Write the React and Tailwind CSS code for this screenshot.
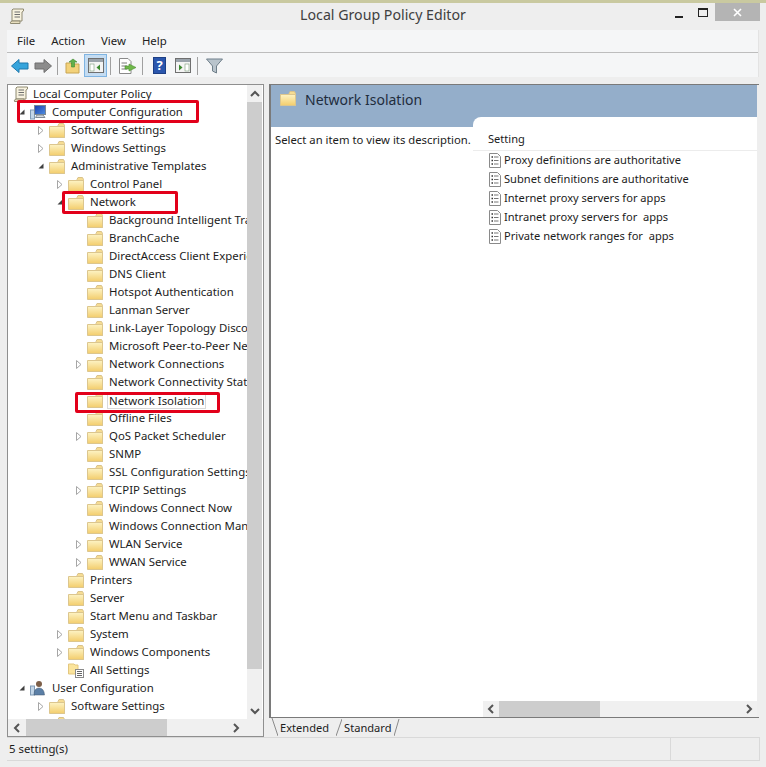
const Folder = () => (
  <svg width="16" height="15" viewBox="0 0 16 15">
    <defs>
      <linearGradient id="folderFill" x1="0" y1="0" x2="0" y2="1">
        <stop offset="0" stopColor="#fdf3c4" />
        <stop offset="1" stopColor="#f3cd6c" />
      </linearGradient>
    </defs>
    <path d="M9 2.5 L10 0.5 H14.5 L15.5 2.5 V14.5 H9 Z" fill="#f6dc92" stroke="#d9c28a" />
    <path d="M0.5 3.5 H15.5 V14.5 H0.5 Z" fill="url(#folderFill)" stroke="#dcc68e" />
  </svg>
);

const SettingIcon = () => (
  <svg width="12" height="15" viewBox="0 0 12 15">
    <path d="M0.5 0.5 H8.5 L11.5 3.5 V14.5 H0.5 Z" fill="#fff" stroke="#8a8a8a" />
    <path d="M2.5 4 H4 M2.5 7.5 H4 M2.5 11 H4" stroke="#333" strokeWidth="1.5" />
    <path d="M5 4 H9.5 M5 7.5 H9.5 M5 11 H9.5" stroke="#777" />
  </svg>
);

const PolicyIcon = () => (
  <svg width="16" height="17" viewBox="0 0 16 17">
    <path d="M4 1 H14.5 V3 L13 4 V13 H3 V2 Z" fill="#f7f2df" stroke="#8f8a72" />
    <path d="M3 13 H11 V15.5 H1.5 Q0.5 14 3 13 Z" fill="#e8dfbf" stroke="#8f8a72" />
    <path d="M5.5 4 H11 M5.5 6.5 H11 M5.5 9 H11" stroke="#6f6f6f" />
  </svg>
);

const ComputerIcon = () => (
  <svg width="16" height="15" viewBox="0 0 16 15">
    <defs>
      <linearGradient id="screenFill" x1="0" y1="0" x2="1" y2="1">
        <stop offset="0" stopColor="#1a3fae" />
        <stop offset="1" stopColor="#4f8fe0" />
      </linearGradient>
    </defs>
    <rect x="0.5" y="5" width="4" height="9" fill="#c3d6e8" stroke="#7f9ab5" />
    <rect x="4.5" y="0.5" width="11" height="9" fill="url(#screenFill)" stroke="#7a8794" />
    <path d="M7 10 H13 L15 12.5 H5.5 Z" fill="#d5d9dd" stroke="#7f8a95" />
  </svg>
);

const UserIcon = () => (
  <svg width="16" height="16" viewBox="0 0 16 16">
    <rect x="0.5" y="6" width="4" height="9" fill="#c3d6e8" stroke="#7f9ab5" />
    <circle cx="9" cy="4" r="3" fill="#7d5f48" />
    <path d="M4 15 Q4 8 9 8 Q14 8 14.5 15 Z" fill="#5b7fa6" stroke="#40566f" strokeWidth="0.5" />
  </svg>
);

const AllSettingsIcon = () => (
  <svg width="16" height="16" viewBox="0 0 16 16">
    <path d="M0.5 2 H6 L7 3 H10 V12 H0.5 Z" fill="#fbe49c" stroke="#e3c77f" />
    <rect x="7.5" y="7.5" width="8" height="8" fill="#fff" stroke="#8a8a8a" />
    <path d="M9 9.5 H14 M9 11.5 H14 M9 13.5 H14" stroke="#666" />
  </svg>
);

const Arrow = ({ state }) => {
  if (state === 'open') {
    return (
      <svg width="6" height="6" viewBox="0 0 6 6">
        <path d="M5.5 0.5 V5.5 H0.5 Z" fill="#404040" />
      </svg>
    );
  }
  if (state === 'closed') {
    return (
      <svg width="6" height="9" viewBox="0 0 6 9">
        <path d="M0.5 0.5 L5 4.5 L0.5 8.5 Z" fill="#fff" stroke="#a6a6a6" />
      </svg>
    );
  }
  return null;
};

// level, label, arrow state, icon kind
const treeRows = [
  [0, 'Computer Configuration', 'open', 'computer'],
  [1, 'Software Settings', 'closed'],
  [1, 'Windows Settings', 'closed'],
  [1, 'Administrative Templates', 'open'],
  [2, 'Control Panel', 'closed'],
  [2, 'Network', 'open'],
  [3, 'Background Intelligent Transfer Service'],
  [3, 'BranchCache'],
  [3, 'DirectAccess Client Experience Settings'],
  [3, 'DNS Client'],
  [3, 'Hotspot Authentication'],
  [3, 'Lanman Server'],
  [3, 'Link-Layer Topology Discovery'],
  [3, 'Microsoft Peer-to-Peer Networking'],
  [3, 'Network Connections', 'closed'],
  [3, 'Network Connectivity Status Indicator'],
  [3, 'Network Isolation', null, 'selected'],
  [3, 'Offline Files'],
  [3, 'QoS Packet Scheduler', 'closed'],
  [3, 'SNMP'],
  [3, 'SSL Configuration Settings'],
  [3, 'TCPIP Settings', 'closed'],
  [3, 'Windows Connect Now'],
  [3, 'Windows Connection Manager'],
  [3, 'WLAN Service', 'closed'],
  [3, 'WWAN Service', 'closed'],
  [2, 'Printers'],
  [2, 'Server'],
  [2, 'Start Menu and Taskbar'],
  [2, 'System', 'closed'],
  [2, 'Windows Components', 'closed'],
  [2, 'All Settings', null, 'allsettings'],
  [0, 'User Configuration', 'open', 'user'],
  [1, 'Software Settings', 'closed'],
  [1, ''],
];

const indents = { 0: 'pl-[10px]', 1: 'pl-[29px]', 2: 'pl-[48px]', 3: 'pl-[67px]' };

const settings = [
  'Proxy definitions are authoritative',
  'Subnet definitions are authoritative',
  'Internet proxy servers for apps',
  'Intranet proxy servers for  apps',
  'Private network ranges for  apps',
];

const ToolButton = ({ children, active }) => (
  <div className={`w-[23px] h-[23px] flex items-center justify-center ${active ? 'bg-[#c4dcf2] border border-[#7fb4e2]' : ''}`}>
    {children}
  </div>
);

const Sep = () => <div className="w-px h-[18px] bg-[#a0a0a0] mx-[3px]" />;

const ScrollChevron = ({ dir }) => {
  const d = { up: 'M1 6 L5 2 L9 6', down: 'M1 2 L5 6 L9 2', left: 'M6 1 L2 5 L6 9', right: 'M2 1 L6 5 L2 9' }[dir];
  const size = dir === 'up' || dir === 'down' ? [10, 8] : [8, 10];
  return (
    <svg width={size[0]} height={size[1]} viewBox={`0 0 ${size[0]} ${size[1]}`}>
      <path d={d} fill="none" stroke="#555" strokeWidth="2" />
    </svg>
  );
};

const App = () => {
  return (
    <div className="relative w-[766px] h-[767px] bg-[#eeeeee] overflow-hidden flex flex-col text-[11.4px] text-[#1c1c1c] font-['Noto_Sans',sans-serif]">
      <div className="h-[3px] bg-[#c9c9a0]" />
      {/* Title bar */}
      <div className="h-[27px] grid grid-cols-[1fr_auto_1fr] items-start">
        <div className="pl-[9px] pt-[5px]">
          <PolicyIcon />
        </div>
        <div className="pt-[2px] text-[14.2px] leading-[20px] text-[#404040]">Local Group Policy Editor</div>
        <div className="flex justify-end pr-[6px]">
          <div className="w-[24px] h-[18px] flex items-end justify-center pb-[3px]">
            <div className="w-[8px] h-[2px] bg-[#222]" />
          </div>
          <div className="w-[24px] h-[18px] flex items-center justify-center">
            <div className="w-[10px] h-[9px] border border-[#222] border-t-2" />
          </div>
          <div className="w-[45px] h-[18px] bg-[#b4b4b4] flex items-center justify-center">
            <svg width="9" height="9" viewBox="0 0 9 9">
              <path d="M1 1 L8 8 M8 1 L1 8" stroke="#fff" strokeWidth="1.6" />
            </svg>
          </div>
        </div>
      </div>

      <div className="ml-[7px] mr-[7px] flex-1 flex flex-col">
        {/* Menu + toolbar */}
        <div className="bg-[#f5f6f7] border-r border-[#e3e3e3]">
          <div className="h-[23px] flex items-center gap-[16px] pl-[10px] border-b border-[#bdbdbd] text-[#222]">
            <span>File</span>
            <span>Action</span>
            <span>View</span>
            <span>Help</span>
          </div>
          <div className="h-[24px] flex items-center pl-[1px] pt-px">
            <ToolButton>
              <svg width="18" height="14" viewBox="0 0 18 14">
                <path d="M8 0.5 L0.5 7 L8 13.5 V10 H17 V4 H8 Z" fill="#35a4dc" stroke="#1f78ad" />
              </svg>
            </ToolButton>
            <ToolButton>
              <svg width="18" height="14" viewBox="0 0 18 14">
                <path d="M10 0.5 L17.5 7 L10 13.5 V10 H1 V4 H10 Z" fill="#8c8c8c" stroke="#6f6f6f" />
              </svg>
            </ToolButton>
            <Sep />
            <ToolButton>
              <svg width="16" height="16" viewBox="0 0 16 16">
                <path d="M1 5 H6 L7 6 H14 V15 H1 Z" fill="#f3d27a" stroke="#c8a552" />
                <path d="M8 1 L12 4 L9.5 4 V9 H6.5 V4 L4 4 Z" fill="#62b04a" stroke="#3c8a30" strokeWidth="0.6" />
              </svg>
            </ToolButton>
            <ToolButton active>
              <svg width="16" height="15" viewBox="0 0 16 15">
                <rect x="0.5" y="0.5" width="15" height="14" fill="#f4f4f4" stroke="#6f6f6f" />
                <rect x="1" y="1" width="14" height="3" fill="#9aa3ab" />
                <rect x="2" y="6" width="4" height="7" fill="#fff" stroke="#7a9a7a" strokeWidth="0.6" />
                <path d="M12 6.5 L8.5 9.5 L12 12.5 Z" fill="#3c8a30" />
              </svg>
            </ToolButton>
            <Sep />
            <div className="pl-[2px]">
              <ToolButton>
                <svg width="18" height="16" viewBox="0 0 18 16">
                  <path d="M0.5 0.5 H9 L12 3.5 V15.5 H0.5 Z" fill="#fff" stroke="#8a8a8a" />
                  <path d="M2.5 5 H8 M2.5 8 H8 M2.5 11 H8" stroke="#7a7a7a" />
                  <path d="M10 6 L17 9.5 L10 13 V11 H6 V8 H10 Z" fill="#6fb84a" stroke="#4a8f2f" strokeWidth="0.6" />
                </svg>
              </ToolButton>
            </div>
            <Sep />
            <div className="pl-[2px]">
              <ToolButton>
                <div className="w-[13px] h-[17px] bg-[#2a56ad] border border-[#1d3f85] text-white text-[13px] font-bold leading-[15px] text-center">?</div>
              </ToolButton>
            </div>
            <ToolButton>
              <svg width="16" height="15" viewBox="0 0 16 15">
                <rect x="0.5" y="0.5" width="15" height="14" fill="#f4f4f4" stroke="#6f6f6f" />
                <rect x="1" y="1" width="14" height="3" fill="#9aa3ab" />
                <rect x="10" y="6" width="4" height="7" fill="#fff" stroke="#7a9a7a" strokeWidth="0.6" />
                <path d="M4 6.5 L7.5 9.5 L4 12.5 Z" fill="#3c8a30" />
              </svg>
            </ToolButton>
            <Sep />
            <div className="pl-[2px]">
              <ToolButton>
                <svg width="17" height="16" viewBox="0 0 17 16">
                  <path d="M0.5 1 H16.5 L10.5 8 V15 L6.5 13 V8 Z" fill="#b9c4cc" stroke="#6f7f8a" />
                </svg>
              </ToolButton>
            </div>
          </div>
        </div>

        {/* Panes */}
        <div className="mt-[7px] flex gap-[5px] h-[653px]">
          {/* Tree */}
          <div className="w-[257px] h-full border border-[#8f8f8f] bg-white flex flex-col">
            <div className="flex-1 min-h-0 flex">
              <div className="flex-1 min-w-0 overflow-hidden">
                <div className="h-[18px] flex items-center pl-[5px] gap-[4px] whitespace-nowrap">
                  <PolicyIcon />
                  <span>Local Computer Policy</span>
                </div>
                {treeRows.map(([level, label, arrow, kind], i) => (
                  <div key={i} className={`h-[18px] flex items-center whitespace-nowrap ${indents[level]}`}>
                    <div className="w-[12px] h-[18px] shrink-0 flex items-center justify-center pr-[4px]">
                      <Arrow state={arrow} />
                    </div>
                    <div className="w-[22px] shrink-0 flex items-center">
                      {kind === 'computer' ? <ComputerIcon /> : kind === 'user' ? <UserIcon /> : kind === 'allsettings' ? <AllSettingsIcon /> : <Folder />}
                    </div>
                    <span className={kind === 'selected' ? 'border border-[#d9d9d9] px-px -mx-[2px] leading-[15px]' : ''}>{label}</span>
                  </div>
                ))}
              </div>
              {/* Vertical scrollbar */}
              <div className="w-[15px] mr-px bg-[#f0f0f0] flex flex-col items-center">
                <div className="h-[17px] flex items-center justify-center"><ScrollChevron dir="up" /></div>
                <div className="w-full h-[567px] bg-[#cdcdcd]" />
                <div className="flex-1" />
                <div className="h-[17px] flex items-center justify-center"><ScrollChevron dir="down" /></div>
              </div>
            </div>
            {/* Horizontal scrollbar */}
            <div className="h-[17px] bg-[#f0f0f0] flex items-center">
              <div className="w-[18px] flex justify-center"><ScrollChevron dir="left" /></div>
              <div className="w-[141px] h-full bg-[#cdcdcd]" />
              <div className="flex-1" />
              <div className="w-[18px] flex justify-center"><ScrollChevron dir="right" /></div>
              <div className="w-[18px]" />
            </div>
          </div>

          {/* Detail pane */}
          <div className="flex-1 h-full flex flex-col text-[11.1px]">
            <div className="h-[634px] border-t border-b border-l-2 border-[#7a7a7a] border-r-0 flex flex-col">
              <div className="flex-1 min-h-0 mr-[2px] bg-[#94aeca] flex flex-col">
                <div className="h-[32px] flex items-center pl-[9px] gap-[9px] text-[#1f2d3d]">
                  <div className="mb-[5px] flex"><Folder /></div>
                  <span className="text-[14px] leading-[20px] pb-[2px]">Network Isolation</span>
                </div>
                <div className="flex-1 flex min-h-0">
                  <div className="w-[202px] flex flex-col">
                    <div className="h-[10px]" />
                    <div className="flex-1 bg-white pl-[4px] pt-[3px] text-[11.3px] leading-[20px] whitespace-nowrap">Select an item to view its description.</div>
                  </div>
                  <div className="flex-1 bg-white rounded-tl-[8px] flex flex-col">
                    <div className="h-[34px] pl-[15px] pt-[13px] leading-[18px] border-b border-[#ececec] flex items-start">Setting</div>
                    <div className="flex-1 pl-[16px]">
                      {settings.map((s) => (
                        <div key={s} className="h-[19px] flex items-center gap-[3px] whitespace-pre">
                          <SettingIcon />
                          <span>{s}</span>
                        </div>
                      ))}
                    </div>
                    <div className="h-[16px] ml-[10px] bg-[#f0f0f0] flex items-center">
                      <div className="w-[16px] flex justify-center"><ScrollChevron dir="left" /></div>
                      <div className="w-[101px] h-full bg-[#cdcdcd]" />
                      <div className="flex-1" />
                      <div className="w-[16px] flex justify-center"><ScrollChevron dir="right" /></div>
                    </div>
                  </div>
                </div>
              </div>
            </div>
            {/* Tabs */}
            <div className="h-[19px] flex items-start pl-[2px]">
              <svg width="7" height="18" viewBox="0 0 7 18" className="shrink-0"><path d="M1 0 L7 18" stroke="#8a8a8a" /></svg>
              <div className="h-[18px] pl-[2px] pr-[7px] leading-[20px]">Extended</div>
              <svg width="6" height="18" viewBox="0 0 6 18" className="shrink-0"><path d="M0 18 L6 1" stroke="#8a8a8a" /></svg>
              <div className="h-[18px] pl-[2px] pr-[3px] leading-[20px]">Standard</div>
              <svg width="6" height="18" viewBox="0 0 6 18" className="shrink-0"><path d="M0 18 L5 1" stroke="#8a8a8a" /></svg>
            </div>
          </div>
        </div>

        {/* Status bar */}
        <div className="h-[24px] mr-[-1px] border-t border-b border-r border-[#d9d9d9] flex">
          <div className="w-[664px] pl-[2px] leading-[22px] border-r border-[#d9d9d9]">5 setting(s)</div>
        </div>
      </div>

      {/* Red annotations drawn on the screenshot */}
      <div className="absolute left-[17px] top-[100px] w-[182px] h-[23px] rounded-[2px] border-[3px] border-[#e2001a]" />
      <div className="absolute left-[62px] top-[191px] w-[116px] h-[23px] rounded-[2px] border-[3px] border-[#e2001a]" />
      <div className="absolute left-[75px] top-[392px] w-[145px] h-[21px] rounded-[2px] border-[3px] border-[#e2001a]" />
    </div>
  );
};

export default App;
